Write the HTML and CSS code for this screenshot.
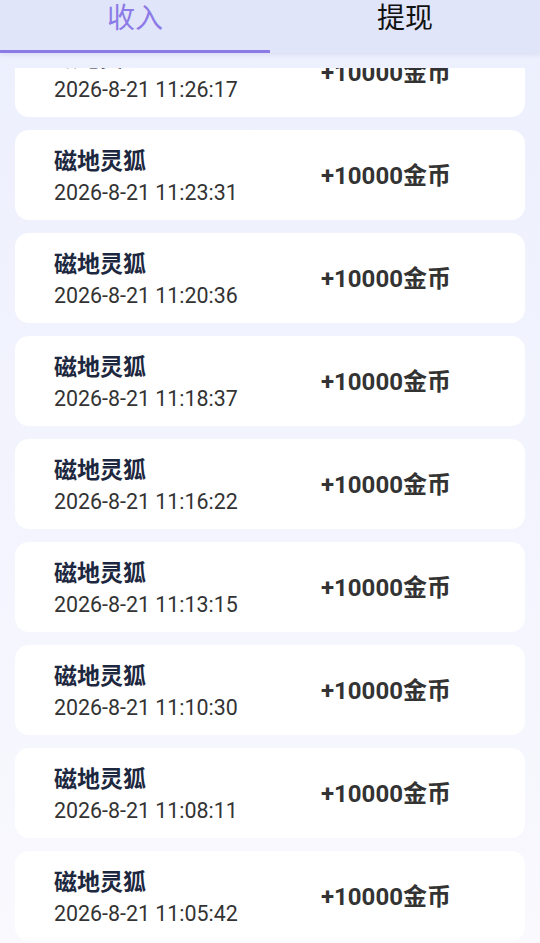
FILE: index.html
```html
<!DOCTYPE html>
<html lang="zh-CN">

<head>
    <meta charset="UTF-8">
    <meta name="viewport" content="width=device-width, initial-scale=1.0">
    <title>收入记录</title>
    <link rel="stylesheet" href="styles.css">
</head>

<body>
    <div class="page">
        <div class="tabs">
            <div class="tab active">收入</div>
            <div class="tab">提现</div>
        </div>
        <div class="list-wrap">
            <ul class="list">
                <li class="card">
                    <div class="info">
                        <div class="name">磁地灵狐</div>
                        <div class="time">2026-8-21 11:26:17</div>
                    </div>
                    <div class="amount">+10000金币</div>
                </li>
                <li class="card">
                    <div class="info">
                        <div class="name">磁地灵狐</div>
                        <div class="time">2026-8-21 11:23:31</div>
                    </div>
                    <div class="amount">+10000金币</div>
                </li>
                <li class="card">
                    <div class="info">
                        <div class="name">磁地灵狐</div>
                        <div class="time">2026-8-21 11:20:36</div>
                    </div>
                    <div class="amount">+10000金币</div>
                </li>
                <li class="card">
                    <div class="info">
                        <div class="name">磁地灵狐</div>
                        <div class="time">2026-8-21 11:18:37</div>
                    </div>
                    <div class="amount">+10000金币</div>
                </li>
                <li class="card">
                    <div class="info">
                        <div class="name">磁地灵狐</div>
                        <div class="time">2026-8-21 11:16:22</div>
                    </div>
                    <div class="amount">+10000金币</div>
                </li>
                <li class="card">
                    <div class="info">
                        <div class="name">磁地灵狐</div>
                        <div class="time">2026-8-21 11:13:15</div>
                    </div>
                    <div class="amount">+10000金币</div>
                </li>
                <li class="card">
                    <div class="info">
                        <div class="name">磁地灵狐</div>
                        <div class="time">2026-8-21 11:10:30</div>
                    </div>
                    <div class="amount">+10000金币</div>
                </li>
                <li class="card">
                    <div class="info">
                        <div class="name">磁地灵狐</div>
                        <div class="time">2026-8-21 11:08:11</div>
                    </div>
                    <div class="amount">+10000金币</div>
                </li>
                <li class="card">
                    <div class="info">
                        <div class="name">磁地灵狐</div>
                        <div class="time">2026-8-21 11:05:42</div>
                    </div>
                    <div class="amount">+10000金币</div>
                </li>
            </ul>
        </div>
    </div>
</body>
</html>
```

FILE: styles.css
```css
body {
    margin: 0;
    font-family: Roboto, "Noto Sans CJK SC", sans-serif;
    background: linear-gradient(#eceffd, #f9f9fe);
    height: 943px;
    overflow: hidden;
}

.page {
    display: flex;
    flex-direction: column;
    height: 100vh;
}

.tabs {
    display: flex;
    height: 53px;
    background-color: #e1e5fa;
    box-shadow: 0 2px 4px rgba(120, 130, 180, 0.15);
    position: relative;
    z-index: 1;
}

.tab {
    flex: 1;
    text-align: center;
    font-size: 28px;
    line-height: 38px;
    color: #111;
    border-bottom: 3px solid transparent;
    box-sizing: border-box;
}

.tab.active {
    color: #8c7be6;
    border-bottom-color: #8c7be6;
}

.list-wrap {
    flex: 1;
    margin-top: 15px;
    overflow: hidden;
}

.list {
    list-style: none;
    margin: -41px 0 0;
    padding: 0 15px;
    display: flex;
    flex-direction: column;
    gap: 13px;
}

.card {
    height: 90px;
    box-sizing: border-box;
    background-color: #fff;
    border-radius: 14px;
    padding: 17px 39px 0;
    display: grid;
    grid-template-columns: 267px auto;
    align-items: start;
}

.name {
    font-size: 23px;
    line-height: 30px;
    font-weight: 700;
    color: #1d2840;
}

.time {
    font-size: 21.4px;
    line-height: 30px;
    margin-top: 1px;
    color: #333;
}

.amount {
    font-size: 24px;
    line-height: 30px;
    font-weight: 700;
    color: #333;
    margin-top: 14px;
}
```
